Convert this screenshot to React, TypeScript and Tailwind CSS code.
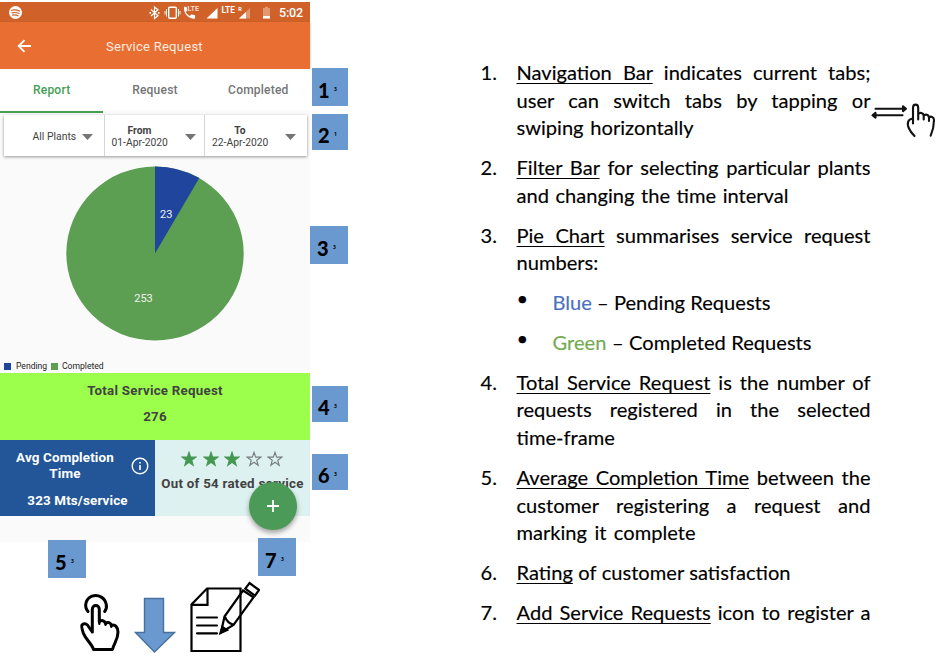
import React from "react";

const Caret = ({ className = "" }: { className?: string }) => (
  <svg className={`h-[6px] w-[11px] shrink-0 ${className}`} viewBox="0 0 11 6">
    <path d="M0 0h11L5.5 6z" fill="#757575" />
  </svg>
);

const Marker = ({ n, small = "3", className = "" }: { n: string; small?: string; className?: string }) => (
  <div className={`flex items-center bg-[#6a99d0] pt-[5px] text-black ${className}`}>
    <span className="w-[16px] font-[Lato,sans-serif] text-[20px] leading-6 font-black">{n}</span>
    <span className="text-[5px] leading-none font-bold">{small}</span>
  </div>
);

function StatusBar() {
  return (
    <div className="mt-[2px] flex h-5 bg-[#d06129] text-white">
      <svg className="h-5 w-[310px]" viewBox="0 2 310 20" fill="none">
        <circle cx="15.5" cy="12.5" r="6.5" fill="#fff" />
        <path d="M11.5 10.3q4-1.3 8 .7M12 12.9q3.5-1 7 .6M12.5 15.2q3-.8 5.6.5" stroke="#d06129" strokeWidth="1.2" strokeLinecap="round" />
        <path d="M151 9.5l7 6.3-3.5 2.7V7l3.5 2.7-7 6.3" stroke="#fff" strokeWidth="1.2" />
        <path d="M149.5 12h1.5v1.7h-1.5zM158 12h1.5v1.7H158z" fill="#fff" />
        <rect x="168.7" y="7.2" width="7.6" height="11" rx="1" stroke="#fff" strokeWidth="1.4" />
        <path d="M166.5 9v7.5M178.5 9v7.5M165 11v3.5M180 11v3.5" stroke="#fff" strokeWidth=".9" />
        <path d="M184 8.1c0 6 4.2 10.6 10.3 10.6.6 0 .8-.3.8-.8v-2.1c0-.5-.3-.8-.8-.8-.9 0-1.8-.2-2.6-.4-.3-.1-.6 0-.8.2l-1.1 1.1c-1.7-.9-3.1-2.3-4-4l1.2-1.2c.2-.2.3-.5.2-.8-.3-.8-.4-1.6-.4-2.5 0-.4-.3-.7-.7-.7h-1.5c-.4 0-.6.4-.6.8z" fill="#fff" />
        <text x="187.5" y="11.2" fontSize="6.4" fontWeight="700" fill="#f8dccb" fontFamily="Roboto" textLength="11.5" lengthAdjust="spacingAndGlyphs">LTE</text>
        <path d="M206.5 18.5L217.5 8v10.5z" fill="#fff" />
        <text x="221.5" y="12.7" fontSize="8.2" fontWeight="700" fill="#fff" fontFamily="Roboto" textLength="13.5" lengthAdjust="spacingAndGlyphs">LTE</text>
        <text x="238.3" y="11" fontSize="5.5" fontWeight="700" fill="#fff" fontFamily="Roboto">R</text>
        <path d="M239 18.5L250 8v10.5z" fill="#e2986f" />
        <path d="M239 18.5L246 12v6.5z" fill="#fff" />
        <path d="M263 8h2V6.8h3V8h2v10.5h-7z" fill="#e2986f" />
        <path d="M263 16h7v2.5h-7z" fill="#fff" />
        <text x="279" y="17" fontSize="12.5" fontWeight="500" fill="#fff" fontFamily="Roboto" textLength="24">5:02</text>
      </svg>
    </div>
  );
}

const Star = ({ filled }: { filled: boolean }) => (
  <svg className="h-[16px] w-[16px]" viewBox="0 0 16 16">
    <path
      d="M8 1.2l1.65 4.9 5.2.05-4.15 3.1 1.5 5L8 11.2l-4.2 3.05 1.5-5-4.15-3.1 5.2-.05z"
      fill={filled ? "#459851" : "none"}
      stroke={filled ? "#459851" : "#777d7d"}
      strokeWidth="1.1"
    />
  </svg>
);

function Phone() {
  return (
    <div className="flex h-[542px] w-[310px] shrink-0 flex-col bg-[#fafafa] font-[Roboto,sans-serif] text-[#424242]">
      <div className="bg-white">
        <StatusBar />
      </div>
      <div className="flex h-[47px] items-center bg-[#e86f31] pl-[17px] text-white shadow-[0_1px_2px_rgba(0,0,0,0.3)]">
        <svg className="h-4 w-[15px]" viewBox="0 0 15 16" fill="none" stroke="#fff" strokeWidth="1.8">
          <path d="M14 8H2M7.5 2.2L1.7 8l5.8 5.8" />
        </svg>
        <span className="mt-[2px] ml-[74px] text-[13px] tracking-[0.27px] text-[#fdebe1]">Service Request</span>
      </div>
      <div className="grid h-[41px] grid-cols-3 bg-white text-center text-[12px] leading-[42px] font-medium tracking-[0.22px] text-[#757575]">
        <div className="border-b-2 border-[#43a052] text-[#43a052]">Report</div>
        <div>Request</div>
        <div>Completed</div>
      </div>
      <div className="mx-[3.5px] mt-[5px] flex h-[41px] shrink-0 bg-white leading-[12px] shadow-[0_1px_3px_rgba(0,0,0,0.4)]">
        <div className="flex w-[101px] items-center border-r border-[#d5d5d5] pt-[2px] pl-[29px] text-[10.4px]">
          <span className="w-[49px] whitespace-nowrap">All Plants</span>
          <Caret />
        </div>
        <div className="flex w-[100px] items-center border-r border-[#d5d5d5] pt-[2px] pl-[7px]">
          <div className="w-[56px] text-center text-[10.3px] whitespace-nowrap">
            <div className="font-bold">From</div>01-Apr-2020
          </div>
          <Caret className="ml-[17px]" />
        </div>
        <div className="flex flex-1 items-center pt-[2px] pl-[7.5px]">
          <div className="w-[56px] text-center text-[10.3px] whitespace-nowrap">
            <div className="font-bold">To</div>22-Apr-2020
          </div>
          <Caret className="ml-[17px]" />
        </div>
      </div>
      <svg className="h-[202px] w-[310px] shrink-0" viewBox="0 156 310 202">
        <ellipse cx="155" cy="253.5" rx="88.7" ry="87" fill="#5c9e52" />
        <path d="M155 253.5V166.5A88.7 87 0 0 1 199.3 178.1Z" fill="#20459c" />
        <g fill="#f0f4ef" fontFamily="Roboto" fontSize="11" textAnchor="middle">
          <text x="166.3" y="218">23</text>
          <text x="143.5" y="302">253</text>
        </g>
      </svg>
      <div className="flex h-[15px] shrink-0 items-center pt-px pl-1 text-[8.6px] text-[#222]">
        <span className="h-[7px] w-[7px] bg-[#20459c]" />
        <span className="ml-[5px] w-[35px]">Pending</span>
        <span className="h-[7px] w-[7px] bg-[#5c9e52]" />
        <span className="ml-[4px]">Completed</span>
      </div>
      <div className="h-[67px] shrink-0 bg-[#9cff4c] pt-[9px] text-center text-[13.3px] leading-[18px] font-bold tracking-[0.25px]">
        <div>Total Service Request</div>
        <div className="mt-[8px]">276</div>
      </div>
      <div className="relative flex h-[76px] shrink-0 font-bold">
        <div className="w-[155px] bg-[#225698] pt-[10px] text-[13.4px] leading-4 tracking-[0.15px] text-white">
          <div className="flex items-center pl-[10px]">
            <div className="w-[110px] text-center">Avg Completion Time</div>
            <svg className="ml-[11px] h-[18px] w-[18px]" viewBox="0 0 18 18">
              <circle cx="9" cy="9" r="7.8" fill="none" stroke="#fff" strokeWidth="1.4" />
              <path d="M8.2 8h1.6v5H8.2zM8.2 5h1.6v1.6H8.2z" fill="#fff" />
            </svg>
          </div>
          <div className="mt-[11px] text-center">323 Mts/service</div>
        </div>
        <div className="flex-1 bg-[#ddf1f1] pt-[11px]">
          <div className="flex gap-[5.5px] pl-[26px]">
            {[true, true, true, false, false].map((f, i) => <Star key={i} filled={f} />)}
          </div>
          <div className="mt-[9px] text-center text-[13.3px] leading-4 tracking-[0.27px] whitespace-nowrap">Out of 54 rated service</div>
        </div>
        <div className="absolute top-[42px] left-[249px] flex h-12 w-12 items-center justify-center rounded-full bg-[#4c9a57] shadow-[0_3px_5px_rgba(0,0,0,0.35)]">
          <svg className="h-3 w-3" viewBox="0 0 12 12"><path d="M6 0v12M0 6h12" stroke="#fff" strokeWidth="1.8" /></svg>
        </div>
      </div>
    </div>
  );
}

const TapIcon = () => (
  <svg className="h-[62px] w-[42px]" viewBox="79 592 42 62" fill="none" stroke="#000" strokeWidth="3" strokeLinejoin="round" strokeLinecap="round">
    <path d="M88 611.5C83.5 606 86 598.5 92 596.2S105 597.5 106.3 604.5Q107 608.5 104.7 611.5" />
    <path d="M92.3 632V609.5C92.3 604.3 99.3 604.3 99.3 609.5V622C101.5 619.5 104.5 620.5 105.5 623.5C108 621.5 110.7 622.5 111.3 625.5C115 624 118 627 118 632C118 640 114 643 112.5 649.5H93.5C92 644 86 640 83.3 633C82 629 81.2 626 82 625C84 622.5 87.5 624 88.8 627L92.3 632" />
    <path d="M99.3 617v7M105.5 622v3M111.3 624v3" strokeWidth="2.2" />
  </svg>
);

const NoteIcon = () => (
  <svg className="h-[72px] w-[72px]" viewBox="188 581 72 72" fill="none" stroke="#000" strokeWidth="2.2">
    <path d="M207 588.5H240.5V651H191.5V604.5Z" />
    <path d="M207.5 588.5V604.8H191.5" />
    <path d="M197 617.5h20M197 625.5h20M197 633.3h20" strokeLinecap="round" />
    <path d="M243 590.5L253.5 597.3L233.5 625L221 632.5L224.5 616.5Z" fill="#fff" />
    <path d="M240.5 594V615" />
    <path d="M249.5 583L259 590L255 595.7L245.3 588.7Z" fill="#fff" />
    <path d="M225 617Q227.5 623 233 624.5" />
    <path d="M220.5 633L222.3 627L227 630Z" fill="#000" />
  </svg>
);

const SwipeIcon = () => (
  <svg className="absolute top-[98px] left-[870px] h-[42px] w-[68px]" viewBox="870 98 68 42" fill="none" stroke="#111" strokeWidth="2.1" strokeLinecap="round" strokeLinejoin="round">
    <path d="M875.5 108.7H904M903 106.3l3 2.4-3 2.4zM902.5 115.3H874M875.5 112.9l-3 2.4 3 2.4z" />
    <path d="M913 123.5V108C913 103.5 918.2 103.5 918.2 108V119.5M918.2 114.5C919 112 923.7 112.5 923.7 116V119.5M923.7 116C925 113.5 929 114.5 929 118V121M929 118C930.5 115.5 934 117 934 120C934 127 932.5 131.5 930.7 135.7M913 118.5C908 119 906.5 123 909 128.5C910.5 132 912.5 134 914.5 136" />
  </svg>
);

/* One printed line; its words are spread over the given measure. */
const Line = ({ w, children }: { w: string; children: React.ReactNode }) => (
  <div className={`h-[27.6px] whitespace-nowrap [text-align-last:justify] ${w}`}>{children}</div>
);

const Item = ({ n, children }: { n: number; children: React.ReactNode }) => (
  <li className="mb-[12.3px] flex">
    <span className="w-[36px] shrink-0">{n}.</span>
    <div>{children}</div>
  </li>
);

const U = ({ children }: { children: React.ReactNode }) => (
  <span className="underline decoration-[1.4px] underline-offset-[3px] [text-decoration-skip-ink:none]">{children}</span>
);

function Notes() {
  return (
    <ol className="w-[390px] pt-[59px] font-[Lato,sans-serif] text-[20.1px] leading-[27.6px] [word-spacing:-1px] text-black [-webkit-text-stroke:0.15px_currentColor]">
      <Item n={1}>
        <Line w="w-[354px]"><U>Navigation Bar</U> indicates current tabs;</Line>
        <Line w="w-[354px]">user can switch tabs by tapping or</Line>
        <Line w="w-[177px]">swiping horizontally</Line>
      </Item>
      <Item n={2}>
        <Line w="w-[354px]"><U>Filter Bar</U> for selecting particular plants</Line>
        <Line w="w-[272px]">and changing the time interval</Line>
      </Item>
      <Item n={3}>
        <Line w="w-[354px]"><U>Pie Chart</U> summarises service request</Line>
        <Line w="w-[86px]">numbers:</Line>
      </Item>
      <li className="mb-[12.3px] flex pl-[36px]">
        <span className="relative -top-1 w-[36px]">•</span>
        <Line w="w-[218px]"><span className="text-[#4a70c0]">Blue</span> – Pending Requests</Line>
      </li>
      <li className="mb-[12.3px] flex pl-[36px]">
        <span className="relative -top-1 w-[36px]">•</span>
        <Line w="w-[259px]"><span className="text-[#74aa50]">Green</span> – Completed Requests</Line>
      </li>
      <Item n={4}>
        <Line w="w-[354px]"><U>Total Service Request</U> is the number of</Line>
        <Line w="w-[354px]">requests registered in the selected</Line>
        <Line w="w-[100px]">time-frame</Line>
      </Item>
      <Item n={5}>
        <Line w="w-[354px]"><U>Average Completion Time</U> between the</Line>
        <Line w="w-[354px]">customer registering a request and</Line>
        <Line w="w-[179px]">marking it complete</Line>
      </Item>
      <Item n={6}>
        <Line w="w-[274px]"><U>Rating</U> of customer satisfaction</Line>
      </Item>
      <Item n={7}>
        <Line w="w-[354px]"><U>Add Service Requests</U> icon to register a</Line>
      </Item>
    </ol>
  );
}

export default function App() {
  return (
    <main className="relative flex h-[656px] w-[946px] overflow-hidden bg-white">
      <section className="w-[480.5px] shrink-0 font-['Open_Sans',sans-serif]">
        <div className="flex h-[538px]">
          <Phone />
          <div className="flex w-[38px] flex-col items-end">
            <Marker n="1" className="mt-[68px] h-[38px] w-9 pl-[6px]" />
            <Marker n="2" small="1" className="mt-2 h-9 w-9 pl-[6px]" />
            <Marker n="3" className="mt-[76px] h-[38px] w-[38px] pl-[7px]" />
            <Marker n="4" className="mt-[122px] h-9 w-9 pl-[6px]" />
            <Marker n="6" className="mt-8 h-9 w-9 pl-[6px]" />
          </div>
        </div>
        <div className="relative flex h-[43px] items-start pl-12">
          <Marker n="5" className="mt-[2px] h-[38px] w-[38px] pl-[7px]" />
          <Marker n="7" className="ml-[172px] h-[38px] w-[38px] pl-[7px]" />
        </div>
        <div className="flex pl-[79px]">
          <div className="mt-[11px]"><TapIcon /></div>
          <svg className="mt-[16px] ml-[13px] h-[57px] w-[42px]" viewBox="134 597 42 57">
            <path d="M144.5 598.5H163.5V632.5H174.5L154.5 652L135.5 632.5H144.5Z" fill="#6a99d0" stroke="#48709f" strokeWidth="1.4" />
          </svg>
          <div className="ml-[12px]"><NoteIcon /></div>
        </div>
      </section>
      <Notes />
      <SwipeIcon />
    </main>
  );
}
